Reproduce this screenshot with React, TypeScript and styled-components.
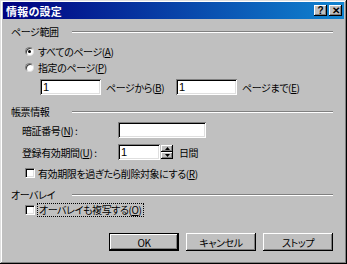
import styled, { createGlobalStyle } from "styled-components";

const GlobalStyle = createGlobalStyle`
  html, body {
    margin: 0;
    padding: 0;
    background: #c0c0c0;
  }
  body {
    font-family: "Noto Sans CJK JP", "Noto Sans", sans-serif;
    font-feature-settings: "palt";
  }
`;

const Window = styled.div`
  width: 347px;
  height: 264px;
  box-sizing: border-box;
  background: #c0c0c0;
  padding: 2px 3px 3px 3px;
  box-shadow: inset -1px -1px #000, inset 1px 1px #dfdfdf,
    inset -2px -2px #808080, inset 2px 2px #fff;
  display: flex;
  flex-direction: column;
  color: #000;
  font-size: 10px;
`;

const TitleBar = styled.div`
  height: 17px;
  display: flex;
  align-items: center;
  justify-content: space-between;
  padding: 0 2px 0 3px;
  background: linear-gradient(to right, #000080, #1084d0);
`;

const TitleText = styled.span`
  color: #fff;
  font-size: 11px;
  font-weight: bold;
  letter-spacing: 0.2px;
`;

const TitleButtons = styled.div`
  display: flex;
  gap: 2px;
`;

const TitleButton = styled.div`
  width: 13px;
  height: 11px;
  background: #c0c0c0;
  box-shadow: inset -1px -1px #000, inset 1px 1px #fff,
    inset -2px -2px #808080;
  display: flex;
  align-items: center;
  justify-content: center;
  font-family: "Liberation Sans", sans-serif;
  font-weight: bold;
  font-size: 10px;
  line-height: 1;
`;

const Content = styled.div`
  padding: 0 11px 0 8px;
  display: flex;
  flex-direction: column;
  letter-spacing: -0.4px;
`;

const SectionHeader = styled.div<{ $top: number }>`
  display: grid;
  grid-template-columns: 61px 1fr;
  align-items: center;
  height: 12px;
  margin-top: ${(p) => p.$top}px;
`;

const Etched = styled.div`
  height: 0;
  border-top: 1px solid #808080;
  border-bottom: 1px solid #fff;
`;

const Row = styled.div<{ $top: number; $left: number; $h?: number }>`
  display: flex;
  align-items: center;
  margin-top: ${(p) => p.$top}px;
  margin-left: ${(p) => p.$left}px;
  height: ${(p) => p.$h ?? 14}px;
`;

const Radio = styled.span<{ $checked?: boolean }>`
  flex-shrink: 0;
  width: 9px;
  height: 9px;
  box-sizing: border-box;
  border-radius: 50%;
  background: #fff;
  border: 1px solid;
  border-color: #808080 #dfdfdf #dfdfdf #808080;
  box-shadow: inset 1px 1px #404040;
  display: flex;
  align-items: center;
  justify-content: center;
  margin-right: 4px;
  &::after {
    content: "";
    width: 3px;
    height: 3px;
    border-radius: 50%;
    background: ${(p) => (p.$checked ? "#000" : "transparent")};
  }
`;

const Check = styled.span`
  flex-shrink: 0;
  width: 10px;
  height: 10px;
  box-sizing: border-box;
  background: #fff;
  border: 1px solid;
  border-color: #808080 #fff #fff #808080;
  box-shadow: inset 1px 1px #000, inset -1px -1px #dfdfdf;
  margin-right: 3px;
`;

const Field = styled.div<{ $w: number; $h?: number }>`
  flex-shrink: 0;
  width: ${(p) => p.$w}px;
  height: ${(p) => p.$h ?? 16}px;
  box-sizing: border-box;
  background: #fff;
  box-shadow: inset 1px 1px #808080, inset -1px -1px #fff,
    inset 2px 2px #000, inset -2px -2px #dfdfdf;
  padding: 1px 3px;
  font-family: "Liberation Sans", sans-serif;
  font-size: 11px;
  line-height: 14px;
  letter-spacing: 0;
`;

const Label = styled.span<{ $w?: number; $ml?: number }>`
  flex-shrink: 0;
  display: inline-block;
  width: ${(p) => (p.$w ? `${p.$w}px` : "auto")};
  margin-left: ${(p) => p.$ml ?? 0}px;
  white-space: nowrap;
`;

const Focus = styled.span`
  outline: 1px dotted #000;
  padding: 0 1px;
  line-height: 12px;
`;

const Spin = styled.div`
  display: flex;
  flex-direction: column;
  margin-left: 1px;
  margin-right: 6px;
`;

const SpinButton = styled.div`
  width: 12px;
  height: 7px;
  background: #c0c0c0;
  box-shadow: inset -1px -1px #000, inset 1px 1px #fff,
    inset -2px -2px #808080;
  display: flex;
  align-items: center;
  justify-content: center;
`;

const Buttons = styled.div`
  display: flex;
  justify-content: flex-end;
  gap: 7px;
  margin-top: 16px;
`;

const Button = styled.div<{ $default?: boolean }>`
  width: 70px;
  height: 18px;
  box-sizing: border-box;
  background: #c0c0c0;
  display: flex;
  align-items: center;
  justify-content: center;
  font-size: 10px;
  box-shadow: ${(p) =>
    p.$default
      ? "inset 0 0 0 1px #000, inset -2px -2px #000, inset 2px 2px #fff, inset -3px -3px #808080"
      : "inset -1px -1px #000, inset 1px 1px #fff, inset -2px -2px #808080"};
`;

const Arrow = ({ up }: { up?: boolean }) => (
  <svg width="5" height="3" viewBox="0 0 5 3">
    <polygon points={up ? "2.5,0 5,3 0,3" : "0,0 5,0 2.5,3"} fill="#000" />
  </svg>
);

export default function App() {
  return (
    <>
      <GlobalStyle />
      <Window>
        <TitleBar>
          <TitleText>情報の設定</TitleText>
          <TitleButtons>
            <TitleButton>?</TitleButton>
            <TitleButton>✕</TitleButton>
          </TitleButtons>
        </TitleBar>
        <Content>
          <SectionHeader $top={5}>
            <span>ページ範囲</span>
            <Etched />
          </SectionHeader>
          <Row $top={8} $left={14}>
            <Radio $checked />
            <Label>
              すべてのページ(<u>A</u>)
            </Label>
          </Row>
          <Row $top={2} $left={14}>
            <Radio />
            <Label>
              指定のページ(<u>P</u>)
            </Label>
          </Row>
          <Row $top={5} $left={29} $h={16}>
            <Field $w={61}>1</Field>
            <Label $w={70} $ml={5}>
              ページから(<u>B</u>)
            </Label>
            <Field $w={61}>1</Field>
            <Label $ml={5}>
              ページまで(<u>E</u>)
            </Label>
          </Row>

          <SectionHeader $top={9}>
            <span>帳票情報</span>
            <Etched />
          </SectionHeader>
          <Row $top={6} $left={11} $h={16}>
            <Label $w={96}>
              暗証番号(<u>N</u>) :
            </Label>
            <Field $w={88} />
          </Row>
          <Row $top={6} $left={11} $h={16}>
            <Label $w={96}>
              登録有効期間(<u>U</u>) :
            </Label>
            <Field $w={42}>1</Field>
            <Spin>
              <SpinButton>
                <Arrow up />
              </SpinButton>
              <SpinButton>
                <Arrow />
              </SpinButton>
            </Spin>
            <Label>日間</Label>
          </Row>
          <Row $top={6} $left={14}>
            <Check />
            <Label>
              有効期限を過ぎたら削除対象にする(<u>R</u>)
            </Label>
          </Row>

          <SectionHeader $top={7}>
            <span>オーバレイ</span>
            <Etched />
          </SectionHeader>
          <Row $top={4} $left={14}>
            <Check />
            <Focus>
              オーバレイも複写する(<u>O</u>)
            </Focus>
          </Row>

          <Buttons>
            <Button $default>OK</Button>
            <Button>キャンセル</Button>
            <Button>ストップ</Button>
          </Buttons>
        </Content>
      </Window>
    </>
  );
}
